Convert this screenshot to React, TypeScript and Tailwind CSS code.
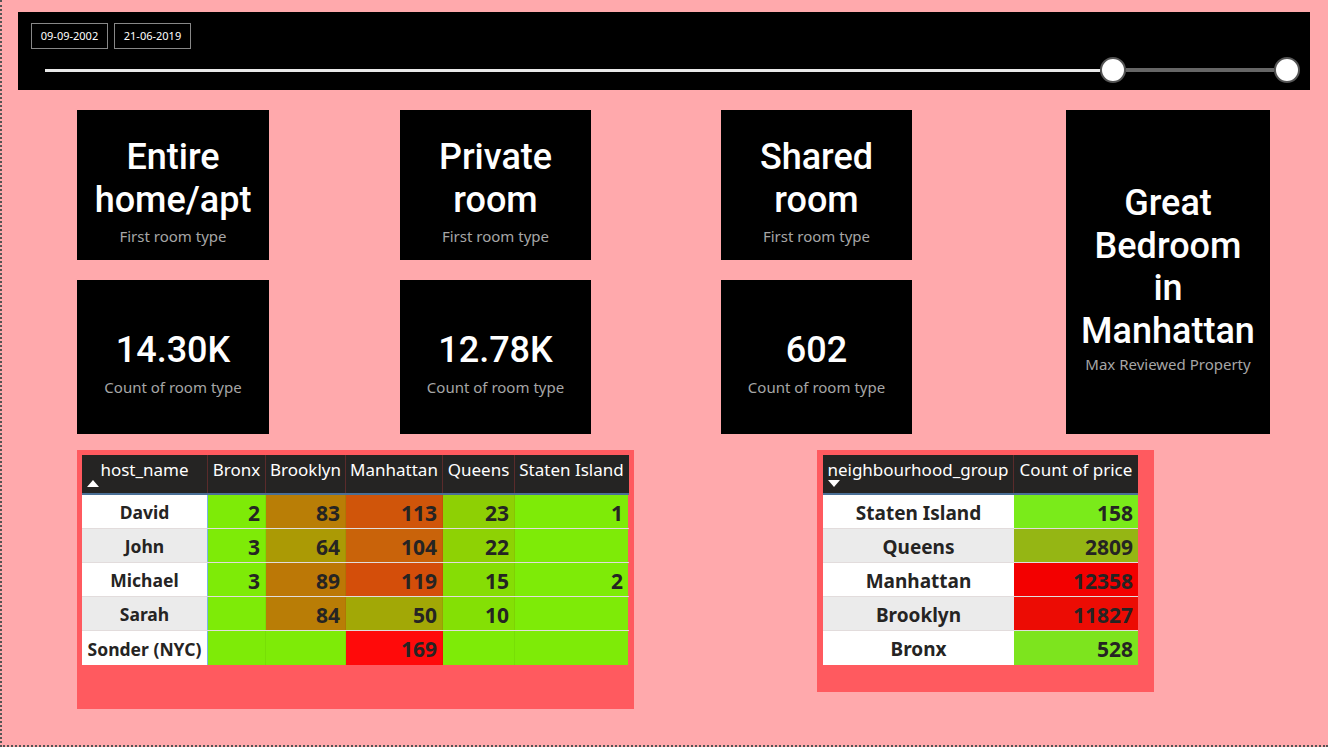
const din = "font-['Roboto',_'DejaVu_Sans',_sans-serif]";
const ui = "font-['Noto_Sans',_'Open_Sans',_sans-serif]";

const G = "bg-[#7eeb07]";

type Cell = { v: string; bg: string };

const hostCols = [
  { name: "host_name", w: "w-[126px]" },
  { name: "Bronx", w: "w-[58px]" },
  { name: "Brooklyn", w: "w-[80px]" },
  { name: "Manhattan", w: "w-[97px]" },
  { name: "Queens", w: "w-[72px]" },
  { name: "Staten Island", w: "w-[113px]" },
];

const hostRows: { name: string; cells: Cell[] }[] = [
  {
    name: "David",
    cells: [
      { v: "2", bg: G },
      { v: "83", bg: "bg-[#b97e06]" },
      { v: "113", bg: "bg-[#d0550a]" },
      { v: "23", bg: "bg-[#8ed004]" },
      { v: "1", bg: G },
    ],
  },
  {
    name: "John",
    cells: [
      { v: "3", bg: G },
      { v: "64", bg: "bg-[#ab9a05]" },
      { v: "104", bg: "bg-[#c9630a]" },
      { v: "22", bg: "bg-[#8ed204]" },
      { v: "", bg: G },
    ],
  },
  {
    name: "Michael",
    cells: [
      { v: "3", bg: G },
      { v: "89", bg: "bg-[#bc7806]" },
      { v: "119", bg: "bg-[#d44e0a]" },
      { v: "15", bg: "bg-[#86dd05]" },
      { v: "2", bg: G },
    ],
  },
  {
    name: "Sarah",
    cells: [
      { v: "", bg: G },
      { v: "84", bg: "bg-[#b97d06]" },
      { v: "50", bg: "bg-[#a2a806]" },
      { v: "10", bg: "bg-[#84e005]" },
      { v: "", bg: G },
    ],
  },
  {
    name: "Sonder (NYC)",
    cells: [
      { v: "", bg: G },
      { v: "", bg: G },
      { v: "169", bg: "bg-[#ff0a0a]" },
      { v: "", bg: G },
      { v: "", bg: G },
    ],
  },
];

const groupRows = [
  { name: "Staten Island", v: "158", bg: "bg-[#7aeb1a]" },
  { name: "Queens", v: "2809", bg: "bg-[#95b614]" },
  { name: "Manhattan", v: "12358", bg: "bg-[#f30000]" },
  { name: "Brooklyn", v: "11827", bg: "bg-[#ec0c04]" },
  { name: "Bronx", v: "528", bg: "bg-[#7de41e]" },
];

function SortArrow({ up }: { up: boolean }) {
  return (
    <svg className="absolute bottom-[6px] left-[5px]" width="12" height="7" viewBox="0 0 12 7">
      <polygon points={up ? "6,0 12,7 0,7" : "0,0 12,0 6,7"} fill="#fff" />
    </svg>
  );
}

function Card({
  title,
  sub,
  className,
  subGap = "mt-[5px]",
}: {
  title: string[];
  sub: string;
  className: string;
  subGap?: string;
}) {
  return (
    <div className={`flex flex-col items-center justify-center bg-black text-center ${className}`}>
      <div className={`${din} text-[36px] font-medium leading-[42.5px] text-white`}>
        {title.map((t) => (
          <div key={t}>{t}</div>
        ))}
      </div>
      <div className={`${ui} ${subGap} text-[15px] leading-5 text-[#a6a6a6]`}>{sub}</div>
    </div>
  );
}

function Knob() {
  return <div className="h-[26px] w-[26px] flex-none rounded-full border-2 border-[#555] bg-white" />;
}

export default function App() {
  return (
    <div className="h-[747px] w-[1328px] overflow-hidden border-b-2 border-l-2 border-dotted border-[#555] bg-[#ffa9ac] pt-3">
      {/* date slicer */}
      <div className="ml-4 h-[78px] w-[1292px] bg-black pl-[13px] pr-[10px] pt-[11px]">
        <div className={`${ui} flex gap-[6px] text-[11px] text-white`}>
          <div className="flex h-[26px] w-[77px] items-center justify-center border border-[#888]">09-09-2002</div>
          <div className="flex h-[26px] w-[77px] items-center justify-center border border-[#888]">21-06-2019</div>
        </div>
        <div className="mt-2 flex items-center pl-[14px]">
          <div className="h-[3px] flex-1 bg-[#e8e8e8]" />
          <Knob />
          <div className="h-[4px] w-[148px] bg-[#666]" />
          <Knob />
        </div>
      </div>

      {/* cards */}
      <div className="ml-[75px] mt-5 flex items-start">
        <div className="flex w-[192px] flex-col gap-5">
          <Card className="h-[150px] pt-3" title={["Entire", "home/apt"]} sub="First room type" />
          <Card className="h-[154px] pt-3" title={["14.30K"]} sub="Count of room type" />
        </div>
        <div className="ml-[131px] flex w-[191px] flex-col gap-5">
          <Card className="h-[150px] pt-3" title={["Private", "room"]} sub="First room type" />
          <Card className="h-[154px] pt-3" title={["12.78K"]} sub="Count of room type" />
        </div>
        <div className="ml-[130px] flex w-[191px] flex-col gap-5">
          <Card className="h-[150px] pt-3" title={["Shared", "room"]} sub="First room type" />
          <Card className="h-[154px] pt-3" title={["602"]} sub="Count of room type" />
        </div>
        <Card
          className="ml-[154px] h-[324px] w-[204px] pt-3"
          subGap="mt-[2px]"
          title={["Great", "Bedroom", "in", "Manhattan"]}
          sub="Max Reviewed Property"
        />
      </div>

      {/* tables */}
      <div className="ml-[75px] mt-4 flex items-start">
        <div className="h-[259px] w-[557px] bg-[#ff5a5f] p-[5px]">
          <div className="flex h-[40px] border-b-2 border-[#4a6f96] bg-[#252423]">
            {hostCols.map((c, i) => (
              <div
                key={c.name}
                className={`${ui} relative ${c.w} flex-none border-r border-[#5a2b2b] pt-[3px] text-center text-[17px] leading-6 text-white ${i === hostCols.length - 1 ? "border-r-0" : ""}`}
              >
                {c.name}
                {i === 0 && <SortArrow up />}
              </div>
            ))}
          </div>
          {hostRows.map((r, ri) => (
            <div key={r.name} className="flex h-[34px] border-b border-[#e2dcdc] last:border-b-0">
              <div
                className={`${ui} flex w-[126px] flex-none items-center justify-center border-r border-[#7ab4e8] pt-[2px] text-[17.5px] font-bold text-[#252423] ${ri % 2 ? "bg-[#ebebeb]" : "bg-white"}`}
              >
                {r.name}
              </div>
              {r.cells.map((c, ci) => (
                <div
                  key={ci}
                  className={`${ui} ${hostCols[ci + 1].w} flex flex-none items-center justify-end pr-[5px] pt-[4px] text-[21px] font-bold text-[#252423] ${c.bg} ${ci < 4 ? "border-r border-black/5" : ""}`}
                >
                  {c.v}
                </div>
              ))}
            </div>
          ))}
        </div>

        <div className="ml-[183px] h-[242px] w-[337px] bg-[#ff5a5f] py-[5px] pl-[6px]">
          <div className="flex h-[40px] w-[315px] border-b-2 border-[#4a6f96] bg-[#252423]">
            <div className={`${ui} relative w-[191px] flex-none border-r border-[#5a2b2b] pt-[3px] text-center text-[17px] leading-6 text-white`}>
              neighbourhood_group
              <SortArrow up={false} />
            </div>
            <div className={`${ui} w-[124px] flex-none pt-[3px] text-center text-[17px] leading-6 text-white`}>
              Count of price
            </div>
          </div>
          {groupRows.map((r, ri) => (
            <div key={r.name} className="flex h-[34px] w-[315px] border-b border-[#e2dcdc] last:border-b-0">
              <div
                className={`${ui} flex w-[191px] flex-none items-center justify-center pt-[3px] text-[19px] font-bold text-[#252423] ${ri % 2 ? "bg-[#ebebeb]" : "bg-white"}`}
              >
                {r.name}
              </div>
              <div
                className={`${ui} flex w-[124px] flex-none items-center justify-end pr-[5px] pt-[4px] text-[21px] font-bold text-[#252423] ${r.bg}`}
              >
                {r.v}
              </div>
            </div>
          ))}
        </div>
      </div>
    </div>
  );
}
